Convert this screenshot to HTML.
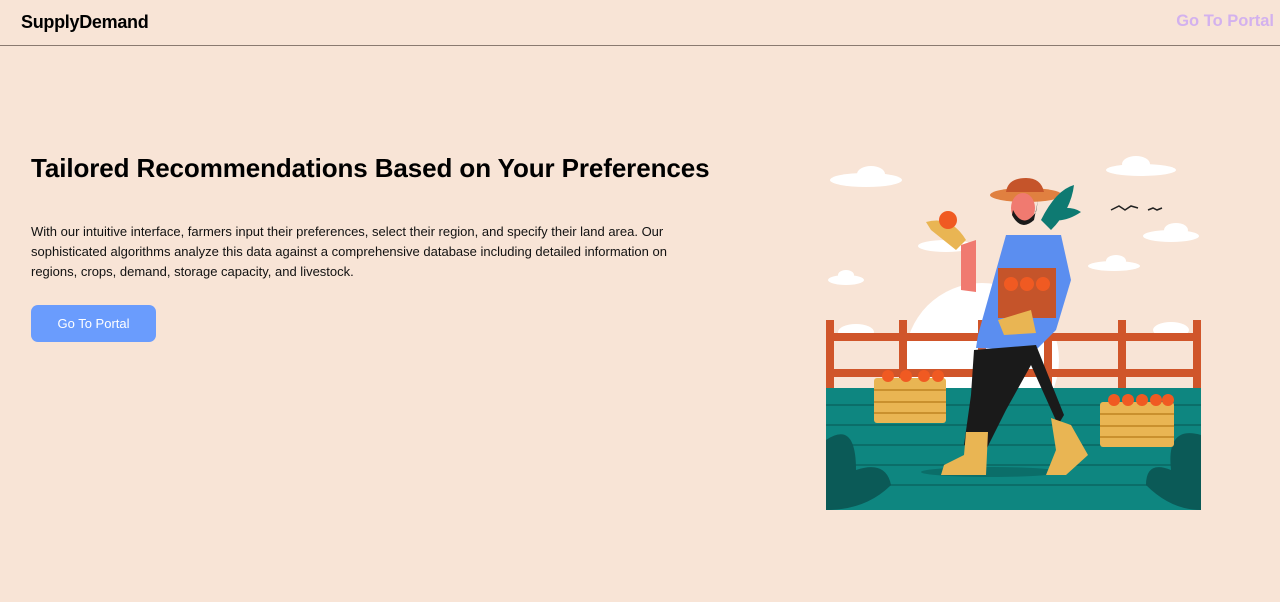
<!DOCTYPE html>
<html><head><style>
body{margin:0;width:1280px;height:602px;background:#f8e4d6;font-family:"Liberation Sans",sans-serif;position:relative;overflow:hidden}
.nav{position:absolute;left:0;top:0;width:1280px;height:45px;border-bottom:1px solid #8a7a70}
.logo{position:absolute;left:21px;top:12px;font-size:18px;font-weight:bold;color:#000;letter-spacing:-0.3px}
.nl{position:absolute;right:6px;top:12px;font-size:16.5px;font-weight:bold;color:#d3b1ee}
h1{position:absolute;left:31px;top:153px;margin:0;font-size:26px;font-weight:bold;color:#000;letter-spacing:-0.1px}
p{position:absolute;left:31px;top:222px;margin:0;width:668px;font-size:13px;line-height:20px;color:#111}
.btn{position:absolute;left:31px;top:305px;width:125px;height:37px;border-radius:7px;background:#6a9cfd;color:#fff;font-size:13px;text-align:center;line-height:37px}
svg{position:absolute;left:826px;top:150px}
</style></head><body>
<div class="nav"><div class="logo">SupplyDemand</div><div class="nl">Go To Portal</div></div>
<h1>Tailored Recommendations Based on Your Preferences</h1>
<p>With our intuitive interface, farmers input their preferences, select their region, and specify their land area. Our sophisticated algorithms analyze this data against a comprehensive database including detailed information on regions, crops, demand, storage capacity, and livestock.</p>
<div class="btn">Go To Portal</div>
<svg width="375" height="360" viewBox="0 0 375 360">
<g fill="#fff">
<ellipse cx="40" cy="30" rx="36" ry="7"/><ellipse cx="45" cy="24" rx="14" ry="8"/>
<ellipse cx="315" cy="20" rx="35" ry="6"/><ellipse cx="310" cy="14" rx="14" ry="8"/>
<ellipse cx="345" cy="86" rx="28" ry="6"/><ellipse cx="350" cy="80" rx="12" ry="7"/>
<ellipse cx="288" cy="116" rx="26" ry="5"/><ellipse cx="290" cy="111" rx="10" ry="6"/>
<ellipse cx="20" cy="130" rx="18" ry="5"/><ellipse cx="20" cy="125" rx="8" ry="5"/>
<ellipse cx="120" cy="96" rx="28" ry="6"/>
<circle cx="156" cy="210" r="77"/>
<ellipse cx="30" cy="182" rx="18" ry="8"/><ellipse cx="345" cy="180" rx="18" ry="8"/>
</g>
<path d="M285 60 l8 -4 l6 4 l6 -4 l7 2 M322 60 l5 -2 l4 2 l5 -2" stroke="#222" stroke-width="1.5" fill="none"/>
<g fill="#d0552a">
<rect x="0" y="170" width="8" height="68"/><rect x="73" y="170" width="8" height="68"/><rect x="152" y="170" width="8" height="68"/><rect x="218" y="170" width="8" height="68"/><rect x="292" y="170" width="8" height="68"/><rect x="367" y="170" width="8" height="68"/>
<rect x="0" y="183" width="375" height="8"/><rect x="0" y="219" width="375" height="8"/>
</g>
<rect x="0" y="238" width="375" height="122" fill="#0e8680"/>
<g stroke="#0b6e69" stroke-width="2"><line x1="0" y1="255" x2="375" y2="255"/><line x1="0" y1="275" x2="375" y2="275"/><line x1="0" y1="295" x2="375" y2="295"/><line x1="0" y1="315" x2="375" y2="315"/><line x1="0" y1="335" x2="375" y2="335"/></g>
<path d="M0 360 V290 Q30 270 30 320 Q60 310 65 335 Q40 360 0 360Z M375 360 V285 Q340 275 345 320 Q320 310 320 335 Q345 360 375 360Z" fill="#0b5a57"/>
<ellipse cx="165" cy="322" rx="70" ry="5" fill="#0b6e69"/>
<g fill="#e9b553"><rect x="48" y="228" width="72" height="45" rx="3"/><rect x="274" y="252" width="74" height="45" rx="3"/></g>
<g stroke="#c9902e" stroke-width="2"><line x1="48" y1="240" x2="120" y2="240"/><line x1="48" y1="252" x2="120" y2="252"/><line x1="48" y1="263" x2="120" y2="263"/><line x1="274" y1="264" x2="348" y2="264"/><line x1="274" y1="276" x2="348" y2="276"/><line x1="274" y1="287" x2="348" y2="287"/></g>
<g fill="#f05a22"><circle cx="62" cy="226" r="6"/><circle cx="80" cy="226" r="6"/><circle cx="98" cy="226" r="6"/><circle cx="112" cy="226" r="6"/><circle cx="288" cy="250" r="6"/><circle cx="302" cy="250" r="6"/><circle cx="316" cy="250" r="6"/><circle cx="330" cy="250" r="6"/><circle cx="342" cy="250" r="6"/></g>
<path d="M152 185 L180 85 L235 85 L245 130 L230 180 L210 200 L150 198Z" fill="#5b8ef0"/>
<path d="M148 200 L210 195 L238 265 L232 275 L205 215 L180 260 L160 300 L138 295 L145 245Z" fill="#1a1a1a"/>
<path d="M140 282 L162 282 L160 325 L115 325 L118 315 L138 305Z M225 268 L245 275 L262 305 L240 325 L220 325 L230 300Z" fill="#e9b553"/>
<path d="M135 95 L150 90 L150 142 L135 140Z" fill="#f07a70"/>
<path d="M100 72 Q125 65 140 90 L130 100 L105 80Z" fill="#e9b553"/>
<circle cx="122" cy="70" r="9" fill="#f05a22"/>
<rect x="172" y="118" width="58" height="50" fill="#c5542a"/>
<g fill="#f05a22"><circle cx="185" cy="134" r="7"/><circle cx="201" cy="134" r="7"/><circle cx="217" cy="134" r="7"/></g>
<path d="M172 170 L205 160 L210 183 L178 185Z" fill="#e9b553"/>
<ellipse cx="200" cy="45" rx="36" ry="7" fill="#e08040"/>
<path d="M180 42 Q182 28 200 28 Q215 28 218 42Z" fill="#c5542a"/>
<ellipse cx="197" cy="58" rx="12" ry="15" fill="#f07a70"/>
<path d="M187 60 Q197 80 210 62 L212 50 L208 70 Q195 82 186 65Z" fill="#1a1a1a"/>
<path d="M215 70 Q230 40 248 35 Q245 60 225 80Z M225 60 Q245 55 255 62 Q240 72 228 70Z" fill="#0e7a72"/>
</svg>
</body></html>
